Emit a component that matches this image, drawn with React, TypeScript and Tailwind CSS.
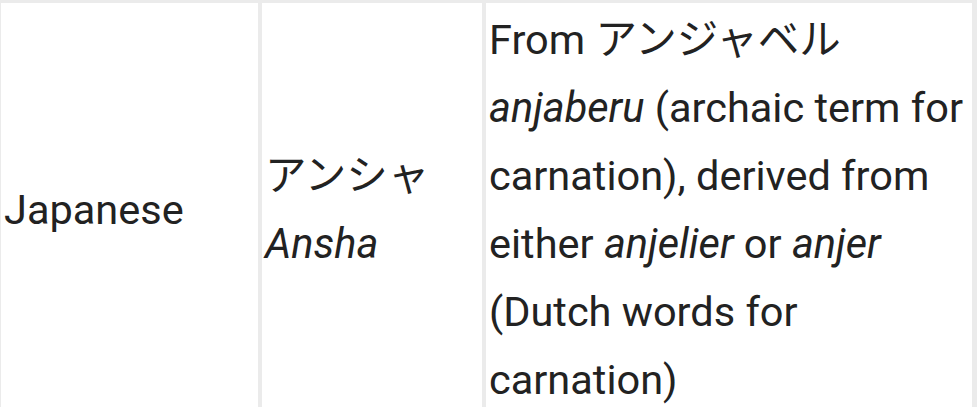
import React from 'react';

const App: React.FC = () => {
  return (
    <div
      className="min-h-screen bg-[#ebebeb] pt-[3px] pl-[1px] text-[#222222] text-[41.5px] leading-[68px]"
      style={{ fontFamily: 'Roboto, "Noto Sans CJK JP", sans-serif' }}
    >
      <div className="grid grid-cols-[257px_220px_486px] gap-x-[4px]">
        <div className="flex items-center bg-white px-[3px] py-[3px]">
          <span>Japanese</span>
        </div>
        <div className="flex items-center bg-white px-[3px] py-[3px]">
          <div>
            <div>アンシャ</div>
            <div className="italic">Ansha</div>
          </div>
        </div>
        <div className="bg-white px-[3px] py-[3px]">
          From アンジャベル <i>anjaberu</i> (archaic term for carnation), derived from either{' '}
          <i>anjelier</i> or <i>anjer</i> (Dutch words for carnation)
        </div>
      </div>
    </div>
  );
};

export default App;
